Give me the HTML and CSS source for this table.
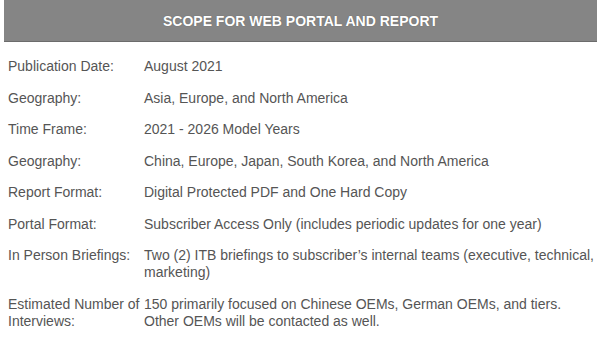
FILE: index.html
```html
<!DOCTYPE html>
<html lang="en">
<head>
<meta charset="utf-8">
<title>Scope for Web Portal and Report</title>
<link rel="stylesheet" href="styles.css">
</head>
<body>
<div class="scope">
  <div class="scope-header">SCOPE FOR WEB PORTAL AND REPORT</div>
  <div class="scope-rows">
    <div class="label">Publication Date:</div><div class="value">August 2021</div>
    <div class="label">Geography:</div><div class="value">Asia, Europe, and North America</div>
    <div class="label">Time Frame:</div><div class="value">2021 - 2026 Model Years</div>
    <div class="label">Geography:</div><div class="value">China, Europe, Japan, South Korea, and North America</div>
    <div class="label">Report Format:</div><div class="value">Digital Protected PDF and One Hard Copy</div>
    <div class="label">Portal Format:</div><div class="value">Subscriber Access Only (includes periodic updates for one year)</div>
    <div class="label">In Person Briefings:</div><div class="value">Two (2) ITB briefings to subscriber’s internal teams (executive, technical, marketing)</div>
    <div class="label">Estimated Number of Interviews:</div><div class="value">150 primarily focused on Chinese OEMs, German OEMs, and tiers. Other OEMs will be contacted as well.</div>
  </div>
</div>
</body>
</html>
```
FILE: styles.css
```css
html, body {
  margin: 0;
  padding: 0;
  background: #ffffff;
}
.scope {
  padding: 0 3px 0 4px;
  font-family: "Liberation Sans", Arial, sans-serif;
}
.scope-header {
  height: 41px;
  background: #858585;
  border-bottom: 1px solid #6c6c6c;
  color: #ffffff;
  font-weight: bold;
  font-size: 14px;
  display: flex;
  align-items: center;
  justify-content: center;
  text-shadow: 0 0 1px rgba(0,0,0,0.35);
}
.scope-rows {
  display: grid;
  grid-template-columns: 140px 1fr;
  padding-top: 9px;
  color: #555555;
  font-size: 14px;
  line-height: 17px;
}
.label, .value {
  padding: 7.25px 0;
}
.label {
  padding-left: 4px;
}
```
